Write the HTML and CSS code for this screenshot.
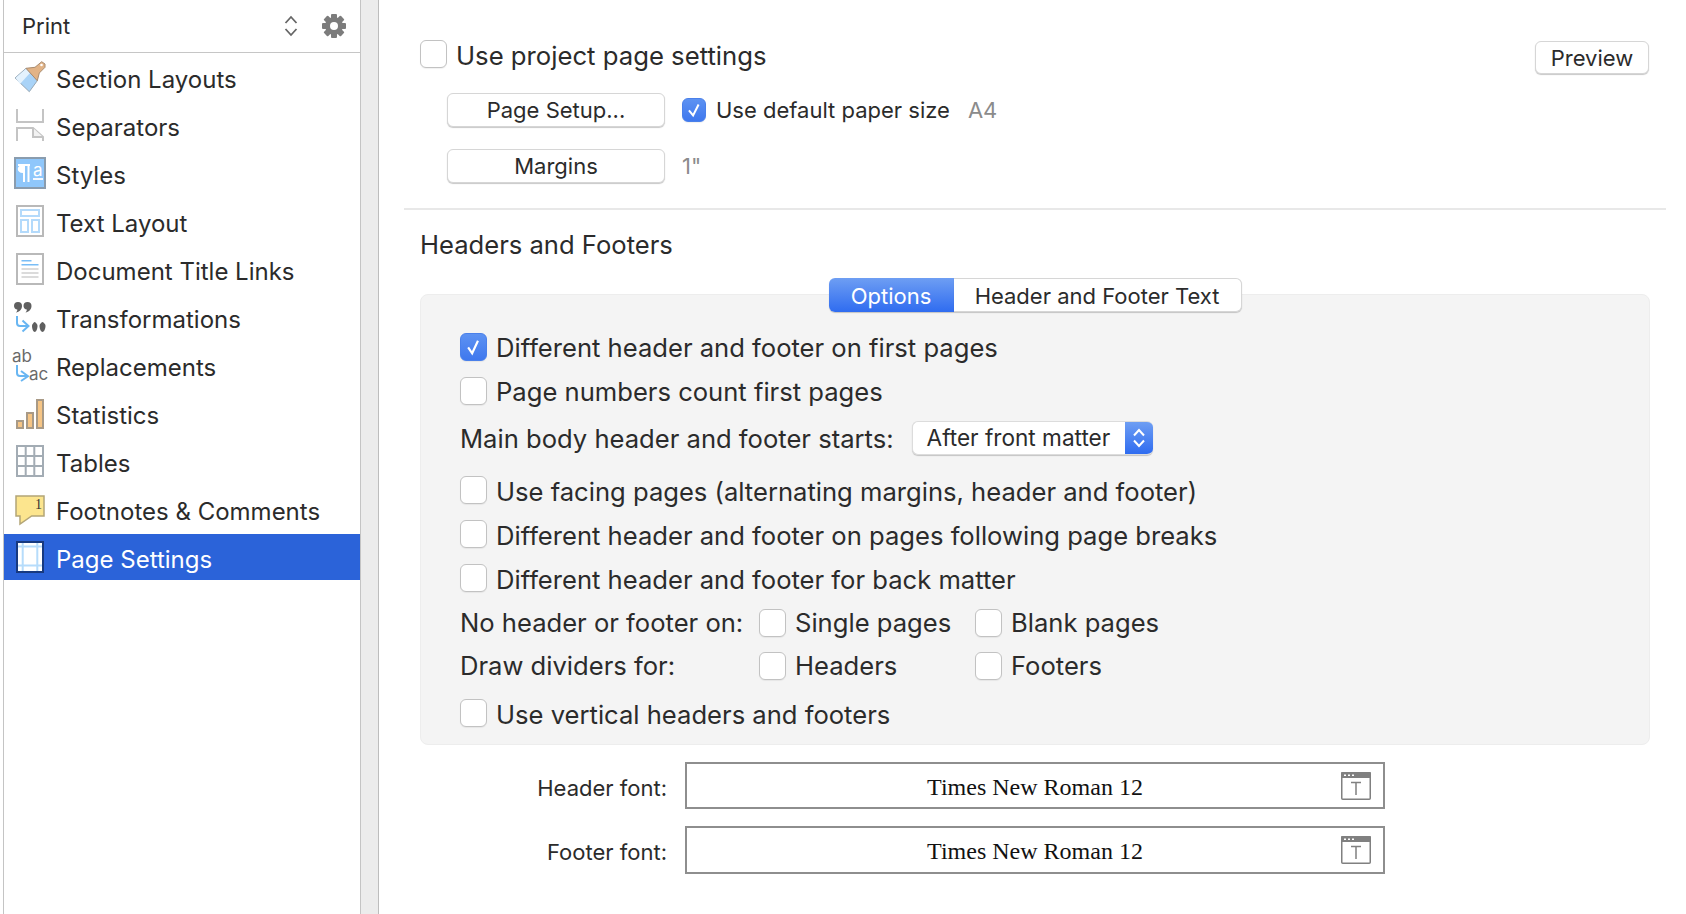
FILE: index.html
```html
<!DOCTYPE html>
<html lang="en">
<head>
<meta charset="utf-8">
<title>Page Settings</title>
<link rel="stylesheet" href="styles.css">
</head>
<body>
<div class="app">
  <aside class="sidebar">
    <header class="side-head">
      <span class="side-title">Print</span>
      <svg class="updown" width="14" height="22" viewBox="0 0 14 22"><path d="M1.500 8 7 2l5.500 6M1.500 14 7 20l5.500-6" fill="none" stroke="#666" stroke-width="1.800"/></svg>
      <svg class="gear" width="26" height="26" viewBox="0 0 26 26">
        <g fill="#7c7c7c">
          <rect x="10" y="1" width="6" height="24" rx="1"/>
          <rect x="10" y="1" width="6" height="24" rx="1" transform="rotate(45 13 13)"/>
          <rect x="10" y="1" width="6" height="24" rx="1" transform="rotate(90 13 13)"/>
          <rect x="10" y="1" width="6" height="24" rx="1" transform="rotate(135 13 13)"/>
          <circle cx="13" cy="13" r="9"/>
        </g>
        <circle cx="13" cy="13" r="4" fill="#fff"/>
      </svg>
    </header>
    <ul class="side-list">
      <li class="side-item">
        <svg class="ico" viewBox="0 0 36 36"><path d="M3 19 14 9.300l11.300 12.400-8 11z" fill="#a9d3f7" stroke="#98a8b5" stroke-width="1"/><path d="M3.500 19 14 9.800l4 4.200L8 25z" fill="#e4f2fd"/><path d="M14 9.300 23 8.300 29.700 2.700 33 5v3.300L27.300 14l-2 7.700z" fill="#e2b386" stroke="#a98c70" stroke-width="1"/><circle cx="29.500" cy="6" r="1.300" fill="#fff"/></svg>
        <span>Section Layouts</span>
      </li>
      <li class="side-item">
        <svg class="ico" viewBox="0 0 36 36"><path d="M5 2v13h26V2M5 34V21h16l10 9v4" fill="none" stroke="#c4c4c4" stroke-width="2"/><path d="M21 21v9h10" fill="#f2f2f2" stroke="#c4c4c4" stroke-width="2"/></svg>
        <span>Separators</span>
      </li>
      <li class="side-item">
        <svg class="ico" viewBox="0 0 36 36"><rect x="3" y="3" width="30" height="30" fill="#8fc7fb" stroke="#8a9cae" stroke-width="2"/><path d="M11 10c-7 0-7 8 0 8z" fill="#fff"/><path d="M6 10h12M12 10v17M16.500 10v17" fill="none" stroke="#fff" stroke-width="2"/><path d="M21 24h10" stroke="#fff" stroke-width="1.800"/><text x="21" y="21" class="ico-a">a</text></svg>
        <span>Styles</span>
      </li>
      <li class="side-item">
        <svg class="ico" viewBox="0 0 36 36"><rect x="5" y="3" width="26" height="30" fill="#fff" stroke="#b9b9b9" stroke-width="2"/><path d="M9 7h18v6H9zM9 17h7v12H9zM20 17h7v12h-7z" fill="#fff" stroke="#b3dafb" stroke-width="2"/></svg>
        <span>Text Layout</span>
      </li>
      <li class="side-item">
        <svg class="ico" viewBox="0 0 36 36"><rect x="5" y="3" width="26" height="30" fill="#fff" stroke="#b9b9b9" stroke-width="2"/><path d="M9.500 9.700h10M9.500 13.700h17" stroke="#79bdf6" stroke-width="1.600"/><path d="M9.500 18h17M9.500 22h17M9.500 26h17" stroke="#cfcfcf" stroke-width="1.600"/></svg>
        <span>Document Title Links</span>
      </li>
      <li class="side-item">
        <svg class="ico" viewBox="0 0 36 36"><g fill="#5f5f5f"><path d="M2 7a4 4 0 1 1 8 0c0 3.500-3 6-6 6.500 1-1.200 1.400-2 1.300-3C3.500 10.300 2 9 2 7z"/><path d="M11.500 7a4 4 0 1 1 8 0c0 3.500-3 6-6 6.500 1-1.200 1.400-2 1.300-3-1.800-.2-3.300-1.500-3.300-3.500z"/><path d="M20 27c0-2.500 2.700-4 2.700-4s2.800 1.500 2.800 4c0 3-1.500 6-2.800 6S20 30 20 27z"/><path d="M27.500 27c0-2.500 3-4 3-4s3 1.500 3 4c0 3-1.700 6-3 6s-3-3-3-6z"/></g><path d="M5 17v7q0 3 3 3h8M10.500 21.500l6 5.500-6 5.500" fill="none" stroke="#69b6f2" stroke-width="2"/></svg>
        <span>Transformations</span>
      </li>
      <li class="side-item">
        <svg class="ico" viewBox="0 0 36 36"><text x="0" y="15" class="ico-t">ab</text><text x="17" y="33" class="ico-t">ac</text><path d="M5 18v8q0 3 3 3h8M9 24l7 5.300L9 34" fill="none" stroke="#69b6f2" stroke-width="2"/></svg>
        <span>Replacements</span>
      </li>
      <li class="side-item">
        <svg class="ico" viewBox="0 0 36 36"><g fill="#f6c585" stroke="#a99a86" stroke-width="2"><rect x="5" y="26" width="6" height="7"/><rect x="15" y="18" width="6" height="15"/><rect x="25" y="5" width="6" height="28"/></g></svg>
        <span>Statistics</span>
      </li>
      <li class="side-item">
        <svg class="ico" viewBox="0 0 36 36"><path d="M5 3h26v30H5zM13.700 3v30M22.300 3v30M5 13h26M5 23h26" fill="#fff" stroke="#a3acb4" stroke-width="2"/></svg>
        <span>Tables</span>
      </li>
      <li class="side-item">
        <svg class="ico" viewBox="0 0 36 36"><path d="M4 5h28v20H19.700L8 33v-8H4z" fill="#fce58e" stroke="#b3a577" stroke-width="1.500"/><text x="23" y="18" class="ico-n">1</text></svg>
        <span>Footnotes &amp; Comments</span>
      </li>
      <li class="side-item side-item--on">
        <svg class="ico" viewBox="0 0 36 36"><rect x="5" y="3" width="26" height="30" fill="#fff" stroke="#17397f" stroke-width="2"/><path d="M6 7.500h24M6 26.500h24M10.700 4v28M25.300 4v28" stroke="#b6dcfb" stroke-width="2"/></svg>
        <span>Page Settings</span>
      </li>
    </ul>
  </aside>
  <div class="strip"></div>
  <main class="main">
    <div class="top-row">
      <span class="box box--lg"></span>
      <span class="top-label">Use project page settings</span>
      <button class="btn btn--preview">Preview</button>
    </div>
    <div class="setup-row">
      <button class="btn btn--wide">Page Setup...</button>
      <span class="box box--on box--sm"><svg viewBox="0 0 24 24" class="tick"><path d="M6.500 12.500 11 18l6-12" fill="none" stroke="#fff" stroke-width="2.200"/></svg></span>
      <span class="opt-label">Use default paper size</span>
      <span class="muted muted--a4">A4</span>
    </div>
    <div class="setup-row setup-row--two">
      <button class="btn btn--wide">Margins</button>
      <span class="muted">1"</span>
    </div>
    <hr class="divider">
    <h2 class="section-title">Headers and Footers</h2>
    <div class="tabs">
      <span class="tab tab--on">Options</span>
      <span class="tab">Header and Footer Text</span>
    </div>
    <section class="panel">
      <label class="row"><span class="box box--on"><svg viewBox="0 0 28 28" class="tick"><path d="M8 14.500 12.500 21 19 7" fill="none" stroke="#fff" stroke-width="2.400"/></svg></span><span>Different header and footer on first pages</span></label>
      <label class="row"><span class="box"></span><span>Page numbers count first pages</span></label>
      <div class="row row--select">
        <span class="select-label">Main body header and footer starts:</span>
        <span class="select"><span class="select-text">After front matter</span><span class="select-arrows"><svg width="14" height="22" viewBox="0 0 14 22"><path d="M2 8.500 7 3l5 5.500M2 13.500 7 19l5-5.500" fill="none" stroke="#fff" stroke-width="2"/></svg></span></span>
      </div>
      <label class="row row--after-select"><span class="box"></span><span>Use facing pages (alternating margins, header and footer)</span></label>
      <label class="row"><span class="box"></span><span>Different header and footer on pages following page breaks</span></label>
      <label class="row"><span class="box"></span><span>Different header and footer for back matter</span></label>
      <div class="row-grid">
        <span>No header or footer on:</span>
        <label class="row"><span class="box"></span><span>Single pages</span></label>
        <label class="row"><span class="box"></span><span>Blank pages</span></label>
      </div>
      <div class="row-grid">
        <span>Draw dividers for:</span>
        <label class="row"><span class="box"></span><span>Headers</span></label>
        <label class="row"><span class="box"></span><span>Footers</span></label>
      </div>
      <label class="row row--last"><span class="box"></span><span>Use vertical headers and footers</span></label>
    </section>
    <div class="font-row">
      <span class="font-label">Header font:</span>
      <div class="font-field"><span>Times New Roman 12</span>
        <svg class="font-ico" width="30" height="28" viewBox="0 0 30 28"><rect x=".75" y=".75" width="28.500" height="26.500" rx="1" fill="#fff" stroke="#808080" stroke-width="1.500"/><rect x="0" y="0" width="30" height="6" rx="1" fill="#808080"/><path d="M3 2.500h2v1.500H3zM7 2.500h2v1.500H7zM11 2.500h2v1.500h-2z" fill="#fff"/><path d="M10 10.500h10M15 10.500V23" fill="none" stroke="#808080" stroke-width="1.500"/></svg>
      </div>
    </div>
    <div class="font-row font-row--two">
      <span class="font-label">Footer font:</span>
      <div class="font-field"><span>Times New Roman 12</span>
        <svg class="font-ico" width="30" height="28" viewBox="0 0 30 28"><rect x=".75" y=".75" width="28.500" height="26.500" rx="1" fill="#fff" stroke="#808080" stroke-width="1.500"/><rect x="0" y="0" width="30" height="6" rx="1" fill="#808080"/><path d="M3 2.500h2v1.500H3zM7 2.500h2v1.500H7zM11 2.500h2v1.500h-2z" fill="#fff"/><path d="M10 10.500h10M15 10.500V23" fill="none" stroke="#808080" stroke-width="1.500"/></svg>
      </div>
    </div>
  </main>
</div>
</body>
</html>
```

FILE: styles.css
```css
* { box-sizing: border-box; }
html, body { margin: 0; height: 100%; }
body {
  background: #fff;
  color: #2b2b2b;
  font-family: Inter, "Noto Sans", sans-serif;
  font-size: 24px;
  overflow: hidden;
}
.app { display: flex; height: 914px; padding-left: 3px; }

/* Sidebar */
.sidebar {
  width: 358px;
  border-left: 1px solid #c4c4c4;
  border-right: 1px solid #c4c4c4;
  flex: none;
}
.side-head {
  height: 53px;
  border-bottom: 1px solid #c6c6c6;
  display: flex;
  align-items: center;
  padding-left: 18px;
}
.side-title { flex: 1; font-size: 22px; }
.updown { margin-right: 23px; }
.gear { margin-right: 13px; }
.side-list { list-style: none; margin: 0; padding: 1px 0 0; display: flex; flex-direction: column; gap: 2px; }
.side-item { height: 46px; display: flex; align-items: center; padding-left: 8px; gap: 8px; }
.side-item span { padding-top: 4px; }
.side-item--on { background: #2b63d9; color: #fff; }
.ico { width: 36px; height: 36px; flex: none; overflow: visible; }
.ico-a { font: 17px Inter, sans-serif; fill: #fff; }
.ico-t { font: 17px Inter, sans-serif; fill: #6a6a6a; }
.ico-n { font: 14px "Liberation Serif", serif; fill: #333; }

/* Middle strip */
.strip { width: 18px; flex: none; background: #ececec; border-right: 1px solid #bdbdbd; }

/* Main */
.main { flex: 1; min-width: 0; padding: 40px 20px 0 25px; }
.top-row { display: flex; align-items: center; height: 34px; padding: 0 17px 0 16px; }
.top-label { flex: 1; margin-left: 9px; font-size: 25.700px; line-height: 34px; position: relative; top: -1px; }
.box {
  width: 27px;
  height: 28px;
  flex: none;
  display: block;
  background: #fff;
  border: 1px solid #c2c2c2;
  border-radius: 6px;
  box-shadow: 0 1px 1px rgba(0, 0, 0, .06);
}
.box--lg { align-self: flex-start; }
.box--sm { width: 24px; height: 24px; }
.box--on { background: linear-gradient(#5d92f2, #3f78ee); border-color: #4a80ea; }
.tick { display: block; width: 100%; height: 100%; }
.btn {
  font: inherit;
  font-size: 22px;
  color: #2b2b2b;
  background: #fff;
  border: 1px solid #d6d6d6;
  border-radius: 6px;
  box-shadow: 0 1px 1px rgba(0, 0, 0, .22);
  padding: 0;
  height: 33px;
}
.btn--preview { width: 114px; align-self: flex-end; }
.btn--wide { width: 218px; height: 34px; margin-right: 17px; }
.setup-row { display: flex; align-items: center; height: 34px; margin-top: 19px; padding-left: 43px; }
.setup-row--two { margin-top: 22px; }
.opt-label { margin-left: 10px; font-size: 22px; }
.muted { color: #8b8b8b; font-size: 22px; }
.muted--a4 { margin-left: 18px; }
.divider { border: 0; height: 2px; background: #e8e8e8; margin: 25px 0 0; }
.section-title { margin: 20px 0 0 16px; font-size: 25.600px; font-weight: 400; line-height: 30px; }
.tabs { display: flex; justify-content: center; height: 34px; margin: 18px 0 -18px; position: relative; z-index: 1; }
.tab {
  width: 288px;
  background: #fff;
  border: 1px solid #d6d6d6;
  border-left: 0;
  border-radius: 0 6px 6px 0;
  box-shadow: 0 1px 1px rgba(0, 0, 0, .2);
  text-align: center;
  font-size: 22px;
  line-height: 34px;
}
.tab--on {
  width: 125px;
  color: #fff;
  background: linear-gradient(#6e9ef3, #2f6cf0);
  border: 0;
  border-radius: 6px 0 0 6px;
  line-height: 36px;
}
.panel {
  margin: 0 16px;
  height: 451px;
  background: #f4f4f4;
  border: 1px solid #ededed;
  border-radius: 8px;
  padding: 38px 39px 0;
  display: flex;
  flex-direction: column;
  gap: 16px;
  font-size: 25.600px;
}
.row { display: flex; align-items: center; height: 28px; gap: 9px; }
.row--select { height: 34px; margin-top: 0; gap: 18px; }
.row--after-select { margin-top: 5px; }
.row--last { margin-top: 5px; }
.row--after-select span:not(.box),
.row--after-select ~ .row span:not(.box) { padding-top: 2px; }
.row--last span:not(.box) { padding-top: 4px; }
.row-grid { display: grid; grid-template-columns: 299px 216px 1fr; align-items: center; height: 28px; margin-top: -1px; }
.select {
  width: 241px;
  height: 34px;
  display: flex;
  background: #fff;
  border-radius: 6px;
  border: 1px solid #dcdcdc;
  border-right: 0;
  box-shadow: 0 1px 1px rgba(0, 0, 0, .2);
  font-size: 22.600px;
  overflow: hidden;
}
.select-text { flex: 1; padding-left: 14px; line-height: 31px; }
.select-arrows { width: 28px; background: linear-gradient(#6e9ef3, #2f6cf0); display: flex; align-items: center; justify-content: center; }
.font-row { display: flex; align-items: center; margin-top: 17px; height: 47px; }
.font-row--two { height: 48px; margin-top: 17px; }
.font-label { width: 281px; text-align: right; padding: 4px 18px 0 0; font-size: 22px; flex: none; }
.font-field {
  width: 700px;
  height: 100%;
  border: 2px solid #8e8e8e;
  background: #fff;
  position: relative;
  display: flex;
  align-items: center;
  justify-content: center;
  padding-top: 4px;
  font-family: "Liberation Serif", serif;
  font-size: 24px;
  color: #111;
}
.font-row--two .font-field { padding-top: 3px; }
.font-ico { position: absolute; right: 12px; top: 8px; }
```
